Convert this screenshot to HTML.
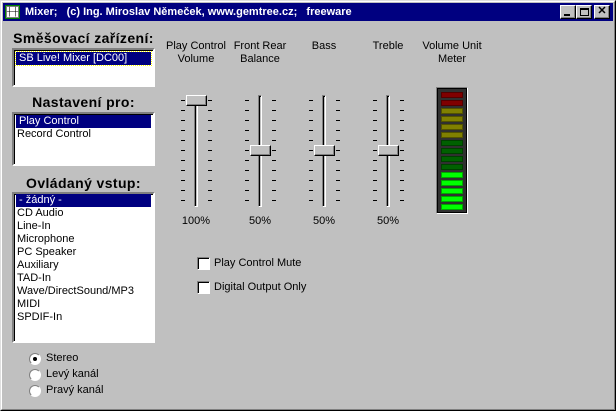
<!DOCTYPE html><html><head><style>
*{margin:0;padding:0;box-sizing:border-box}
body{width:616px;height:411px;background:#c0c0c0;font-family:"Liberation Sans",Arial,sans-serif;font-size:11px;color:#000;position:relative;overflow:hidden}
.a{position:absolute}
.win{left:0;top:0;width:616px;height:411px;border:1px solid;border-color:#dfdfdf #000 #000 #dfdfdf}
.win2{left:1px;top:1px;width:614px;height:409px;border:1px solid;border-color:#fff #808080 #808080 #fff}
.title{left:3px;top:3px;width:610px;height:18px;background:#000080;color:#fff;font-weight:bold;font-size:11px;line-height:18px;padding-left:22px;white-space:pre}
.btn{top:5px;width:16px;height:14px;background:#c0c0c0;border:1px solid;border-color:#fff #000 #000 #fff;box-shadow:inset -1px -1px #808080}
.lbl{font-weight:bold;font-size:14px;letter-spacing:0.4px;text-align:center;width:143px;left:12px}
.lb{background:#fff;border:2px solid;border-color:#808080 #fff #fff #808080;box-shadow:inset 1px 1px #000}
.it{height:13px;line-height:13px;padding-left:3px;white-space:nowrap;font-size:11px}
.sel{background:#000080;color:#fff;margin:0 2px 0 2px}
.c{text-align:center;width:80px;line-height:13px}
.track{width:4px;border:1px solid;border-color:#808080 #fff #fff #808080;background:#c0c0c0;box-shadow:inset 1px 1px #000}
.tk{width:4px;height:1px;background:#000}
.th{width:21px;height:11px;background:#c0c0c0;border:1px solid;border-color:#fff #000 #000 #fff;box-shadow:inset -1px -1px #808080}
.cb{width:13px;height:13px;background:#fff;border:1px solid;border-color:#808080 #fff #fff #808080;box-shadow:inset 1px 1px #000}
.rd{width:12px;height:12px;border-radius:50%;background:#fff;border:1px solid;border-color:#808080 #fff #fff #808080}
</style></head><body>
<div class="a win"></div><div class="a win2"></div>
<div class="a title">Mixer;   (c) Ing. Miroslav Němeček, www.gemtree.cz;   freeware</div>
<div class="a" style="left:5px;top:5px;width:15px;height:14px;background:#fff;border:1px solid #008000;box-shadow:inset 0 0 0 1px #808080"><div style="font-size:8px;color:#000;line-height:12px;text-align:center">┼┼</div></div>
<div class="a btn" style="left:560px"><div class="a" style="left:3px;top:8px;width:6px;height:2px;background:#000"></div></div>
<div class="a btn" style="left:576px"><div class="a" style="left:3px;top:2px;width:9px;height:8px;border:1px solid #000;border-top-width:2px"></div></div>
<div class="a btn" style="left:594px;font-weight:bold;font-size:11px;line-height:11px;text-align:center">✕</div>

<div class="a lbl" style="top:30px">Směšovací zařízení:</div>
<div class="a lb" style="left:12px;top:48px;width:143px;height:39px"><div class="it sel" style="margin-top:2px;outline:1px dotted #ff0">SB Live! Mixer [DC00]</div></div>
<div class="a lbl" style="top:94px">Nastavení pro:</div>
<div class="a lb" style="left:12px;top:112px;width:143px;height:54px;padding-top:1px"><div class="it sel">Play Control</div><div class="it">Record Control</div></div>
<div class="a lbl" style="top:175px">Ovládaný vstup:</div>
<div class="a lb" style="left:12px;top:192px;width:143px;height:151px;padding-top:0px">
<div class="it sel">- žádný -</div><div class="it">CD Audio</div><div class="it">Line-In</div><div class="it">Microphone</div><div class="it">PC Speaker</div><div class="it">Auxiliary</div><div class="it">TAD-In</div><div class="it">Wave/DirectSound/MP3</div><div class="it">MIDI</div><div class="it">SPDIF-In</div></div>

<div class="a rd" style="left:29px;top:353px"><div class="a" style="left:3px;top:3px;width:4px;height:4px;background:#000;border-radius:50%"></div></div>
<div class="a" style="left:46px;top:352px">Stereo</div>
<div class="a rd" style="left:29px;top:369px"></div><div class="a" style="left:46px;top:368px">Levý kanál</div>
<div class="a rd" style="left:29px;top:385px"></div><div class="a" style="left:46px;top:384px">Pravý kanál</div>

<div class="a c" style="left:156px;top:40px">Play Control<br>Volume</div>
<div class="a c" style="left:220px;top:40px">Front Rear<br>Balance</div>
<div class="a c" style="left:284px;top:40px">Bass</div>
<div class="a c" style="left:348px;top:40px">Treble</div>
<div class="a c" style="left:412px;top:40px">Volume Unit<br>Meter</div>

<div id="sl"></div>
<div class="a c" style="left:156px;top:215px">100%</div>
<div class="a c" style="left:220px;top:215px">50%</div>
<div class="a c" style="left:284px;top:215px">50%</div>
<div class="a c" style="left:348px;top:215px">50%</div>

<div class="a" style="left:436px;top:87px;width:32px;height:127px;background:#303030;border:1px solid;border-color:#808080 #fff #fff #808080;box-shadow:inset 1px 1px #000,inset -1px -1px #000"></div>
<div id="vu"></div>

<div class="a cb" style="left:197px;top:257px"></div><div class="a" style="left:214px;top:257px">Play Control Mute</div>
<div class="a cb" style="left:197px;top:281px"></div><div class="a" style="left:214px;top:281px">Digital Output Only</div>
<script>
var h='',cx=[196,260,324,388],ty=[96,146,146,146];
cx.forEach(function(x,i){
h+='<div class="a track" style="left:'+(x-2)+'px;top:95px;height:112px"></div>';
for(var k=0;k<11;k++){var y=100+k*10;h+='<div class="a tk" style="left:'+(x-15)+'px;top:'+y+'px"></div><div class="a tk" style="left:'+(x+12)+'px;top:'+y+'px"></div>';}
h+='<div class="a th" style="left:'+(x-10)+'px;top:'+(ty[i]-1)+'px"></div>';
});
document.getElementById('sl').outerHTML=h;
var v='',cols=['#800000','#800000','#808000','#808000','#808000','#808000','#006000','#006000','#006000','#006000','#00ff00','#00ff00','#00ff00','#00ff00','#00ff00'];
cols.forEach(function(c,i){v+='<div class="a" style="left:441px;top:'+(92+i*8)+'px;width:22px;height:6px;background:'+c+';border:1px solid rgba(0,0,0,.35)"></div>';});
document.getElementById('vu').outerHTML=v;
</script>
</body></html>
